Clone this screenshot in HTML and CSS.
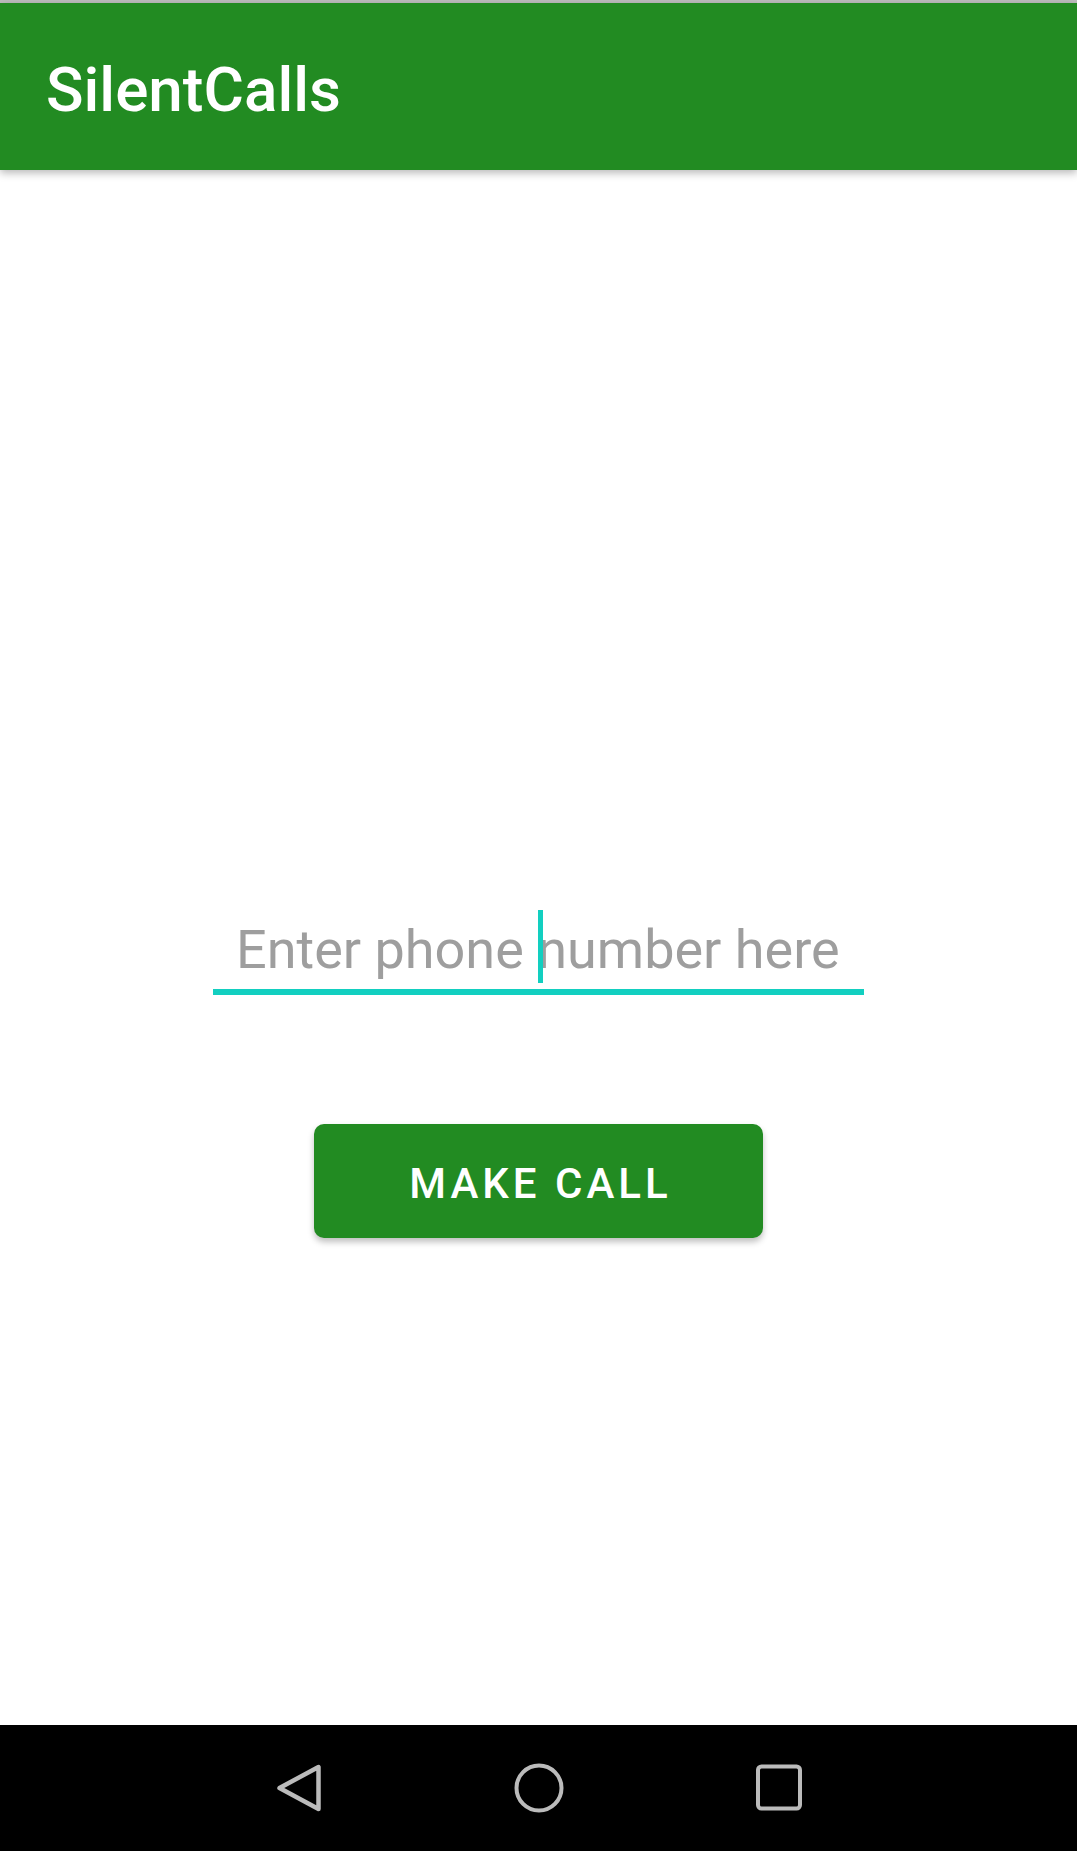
FILE: index.html
```html
<!DOCTYPE html>
<html lang="en">
<head>
<meta charset="utf-8">
<title>SilentCalls</title>
<link rel="stylesheet" href="styles.css">
</head>
<body>
<div class="screen">
  <div class="status-strip"></div>
  <header class="app-bar">
    <h1 class="title">SilentCalls</h1>
  </header>
  <main class="content">
    <div class="field">
      <span class="hint">Enter phone number here</span>
      <span class="cursor"></span>
    </div>
    <button class="call-btn" type="button">MAKE CALL</button>
  </main>
  <nav class="nav-bar">
    <svg class="nav-icon" width="50" height="52" viewBox="0 0 50 52">
      <path d="M44.5 5 L44.5 47 L5.5 26 Z" fill="none" stroke="#bbbbbb" stroke-width="4.5" stroke-linejoin="round"/>
    </svg>
    <svg class="nav-icon" width="50" height="52" viewBox="0 0 50 52">
      <circle cx="25" cy="26" r="22.5" fill="none" stroke="#bbbbbb" stroke-width="4"/>
    </svg>
    <svg class="nav-icon" width="50" height="52" viewBox="0 0 50 52">
      <rect x="4" y="4.5" width="42" height="42" rx="3.5" fill="none" stroke="#bbbbbb" stroke-width="4"/>
    </svg>
  </nav>
</div>
</body>
</html>
```

FILE: styles.css
```css
* {
  box-sizing: border-box;
}

html, body {
  margin: 0;
  padding: 0;
  background: #ffffff;
}

body {
  font-family: Roboto, "Noto Sans", "Liberation Sans", sans-serif;
}

.screen {
  width: 1077px;
  height: 1851px;
  display: flex;
  flex-direction: column;
  overflow: hidden;
}

.status-strip {
  height: 3px;
  background: #bdbdbd;
  flex: none;
}

.app-bar {
  height: 167px;
  flex: none;
  background: #228b22;
  display: flex;
  align-items: center;
  padding-left: 46px;
  padding-top: 5px;
  box-shadow: 0 3px 8px rgba(0, 0, 0, 0.28);
  position: relative;
  z-index: 1;
}

.title {
  margin: 0;
  color: #ffffff;
  font-size: 62px;
  line-height: 73px;
  font-weight: 500;
  letter-spacing: 0;
}

.content {
  flex: 1;
  display: flex;
  flex-direction: column;
  align-items: center;
  padding-top: 734px;
}

.field {
  position: relative;
  width: 651px;
  padding: 14px 0 8px 23px;
  border-bottom: 6px solid #12cfc0;
}

.hint {
  display: block;
  font-size: 54px;
  line-height: 63px;
  color: #9e9e9e;
  white-space: nowrap;
}

.cursor {
  position: absolute;
  left: 325px;
  top: 6px;
  width: 5px;
  height: 73px;
  background: #12cfc0;
}

.call-btn {
  margin-top: 129px;
  width: 449px;
  height: 114px;
  border: none;
  border-radius: 10px;
  background: #228b22;
  color: #ffffff;
  font-family: Roboto, "Noto Sans", "Liberation Sans", sans-serif;
  font-size: 42px;
  font-weight: 500;
  letter-spacing: 4px;
  padding: 4px 0 0 4px;
  box-shadow: 0 4px 6px rgba(0, 0, 0, 0.25);
}

.nav-bar {
  height: 126px;
  flex: none;
  background: #000000;
  display: flex;
  justify-content: center;
  align-items: center;
  gap: 190px;
}

.nav-icon {
  display: block;
}
```
